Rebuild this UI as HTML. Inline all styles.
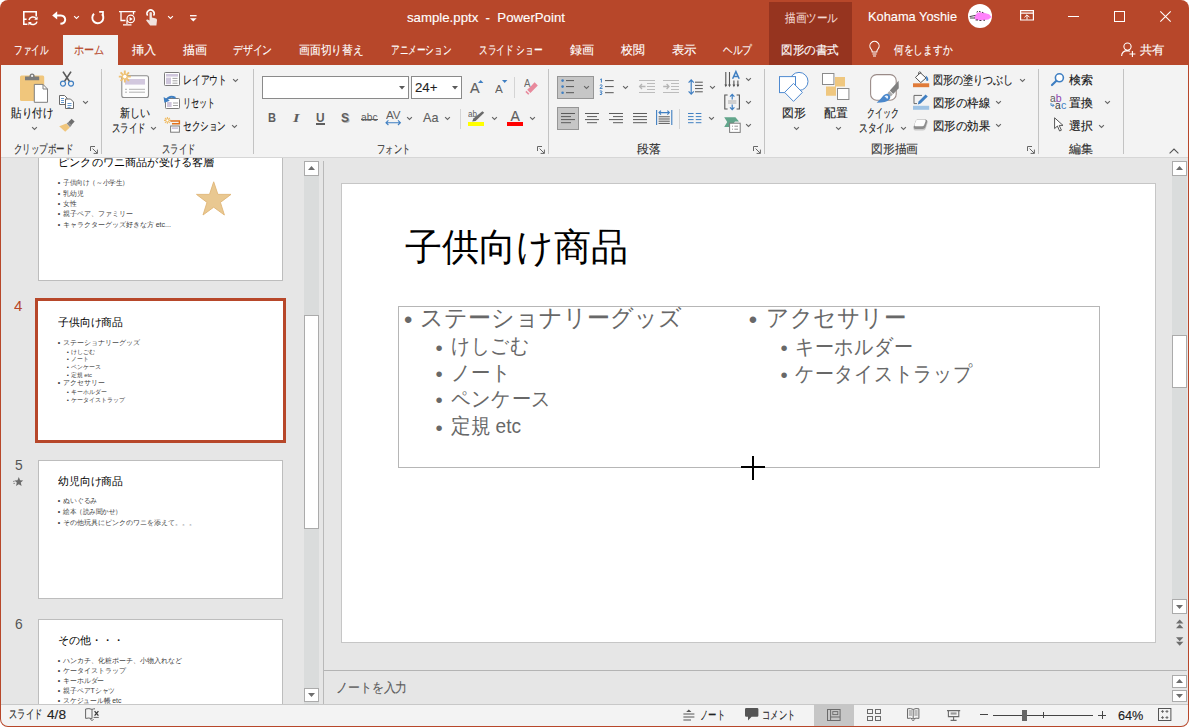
<!DOCTYPE html>
<html lang="ja"><head><meta charset="utf-8"><title>sample.pptx - PowerPoint</title><style>
html,body{margin:0;padding:0;}
body{width:1189px;height:727px;overflow:hidden;background:#fff;font-family:"Liberation Sans",sans-serif;position:relative;}
.a{position:absolute;box-sizing:border-box;}
.t{position:absolute;white-space:nowrap;transform-origin:0 50%;letter-spacing:0;}
svg{display:block;overflow:visible;}
</style></head>
<body>
<div class="a" style="left:0;top:0;width:1189px;height:727px;background:#b7472a;border-radius:8px 8px 8px 8px;"></div><div class="a" style="left:1px;top:65px;width:1187px;height:93px;background:#f3f3f3;"></div><div class="a" style="left:1px;top:157px;width:1187px;height:1px;background:#d6d6d6;"></div><div class="a" style="left:1px;top:158px;width:1187px;height:546px;background:#e6e6e6;"></div><div class="a" style="left:1px;top:704px;width:1187px;height:22px;background:#f3f3f3;border-radius:0 0 7px 7px;"></div><svg class="a" style="left:23px;top:11px;" width="15" height="15" viewBox="0 0 15 15"><path d="M0.8 14 V0.8 H13.2 V5.6 M0.8 13.2 H4.4 M1 8.2 H3.6" fill="none" stroke="#fff" stroke-width="1.6"/><path d="M6 9 A4 3.7 0 0 1 13.2 7.6 M14 10.6 A4 3.7 0 0 1 6.8 12" fill="none" stroke="#fff" stroke-width="1.5"/><path d="M14.6 5.4 V8.8 H11.2 Z M5.4 14.4 V11 H8.8 Z" fill="#fff"/></svg><svg class="a" style="left:52px;top:10.6px;" width="14.4" height="14" viewBox="0 0 14.4 14"><path d="M0.2 4.4 L5.2 0.2 V8.6 Z" fill="#fff"/><path d="M4.6 4.4 H8.8 Q13.2 4.8 13.2 8.8 Q12.8 12.4 8.4 12.8" fill="none" stroke="#fff" stroke-width="2"/></svg><svg class="a" style="left:72.5px;top:15px;" width="7" height="5" viewBox="0 0 7 5"><path d="M1.1 1.1 L3.5 3.5 L5.9 1.1" fill="none" stroke="#fff" stroke-width="1.1"/></svg><svg class="a" style="left:91px;top:11px;" width="14" height="14" viewBox="0 0 14 14"><path d="M11 3.2 A5.5 5.5 0 1 1 3 2.8" fill="none" stroke="#fff" stroke-width="1.9"/><path d="M8.2 0.9 H12 V5" fill="none" stroke="#fff" stroke-width="1.7"/></svg><svg class="a" style="left:119px;top:11px;" width="17" height="15" viewBox="0 0 17 15"><path d="M0 0.7 H16.5 M2 1 V9.5 H6.5 M14.5 1 V3.5 M8 9.5 V13 M4 13.8 H12.5" fill="none" stroke="#fff" stroke-width="1.3"/><circle cx="11.7" cy="7.9" r="3.7" fill="none" stroke="#fff" stroke-width="1.2"/><path d="M10.6 5.9 L13.8 7.9 L10.6 9.9 Z" fill="#fff"/></svg><svg class="a" style="left:145px;top:9px;" width="13" height="17" viewBox="0 0 13 17"><path d="M2.6 6.6 A3.6 3.6 0 1 1 8.6 6.6" fill="none" stroke="#fff" stroke-width="1.5"/><path d="M4.5 3.6 Q5.7 2.4 6.9 3.6 V8.4 L11 9.4 Q12.2 9.8 12 11.2 L11.4 16.5 H5.2 L1.2 11.6 Q1.2 10.2 2.6 10.4 L4.5 11.6 Z" fill="#f0e2de"/></svg><svg class="a" style="left:166.5px;top:15px;" width="7" height="5" viewBox="0 0 7 5"><path d="M1.1 1.1 L3.5 3.5 L5.9 1.1" fill="none" stroke="#fff" stroke-width="1.1"/></svg><svg class="a" style="left:190px;top:14.5px;" width="7" height="7" viewBox="0 0 7 7"><path d="M0 0.7 H6.6" stroke="#fff" stroke-width="1.3"/><path d="M0 3.2 H6.6 L3.3 6.6 Z" fill="#fff"/></svg><span class="t" style="left:407px;top:8px;font-size:13.5px;line-height:19px;color:#ffffff;transform:scaleX(0.979);-webkit-text-stroke:0.13px #ffffff;">sample.pptx&nbsp; - &nbsp;PowerPoint</span><div class="a" style="left:769px;top:2px;width:83px;height:63px;background:#96341f;"></div><span class="t" style="left:785px;top:9.5px;font-size:12px;line-height:17px;color:#f3d9d2;transform:scaleX(0.883);-webkit-text-stroke:0.13px #f3d9d2;">描画ツール</span><span class="t" style="left:868px;top:6.5px;font-size:13.5px;line-height:19px;color:#ffffff;transform:scaleX(0.949);-webkit-text-stroke:0.13px #ffffff;">Kohama Yoshie</span><div class="a" style="left:968px;top:4px;width:24px;height:24px;border-radius:50%;background:#fff;"></div><svg class="a" style="left:968px;top:4px;" width="24" height="24" viewBox="0 0 24 24"><path d="M6.5 12 L9.4 8.8 L12 8.2 L16 8.8 L21 10.2 L23.6 13 L20.4 15.6 L14 16.2 L8 16 L6.4 14 Z" fill="#ff82fb"/><path d="M1.6 12.6 L7.4 11.4 M2 14 H7 M8.6 8.2 L10 7.4 M11 7.4 L12.6 7.8 M14 8.2 L15.4 8.8 M7.6 16 H10 M11.4 16.5 H13.4 M15.4 16.3 H17" stroke="#1a1018" stroke-width="0.8"/></svg><svg class="a" style="left:1019.6px;top:10.4px;" width="14" height="11" viewBox="0 0 14 11"><path d="M0.6 0.6 H13.4 V10 H0.6 Z M0.6 3.2 H13.4" fill="none" stroke="#fff" stroke-width="1.2"/><path d="M7 9.6 V5 M4.4 7.4 L7 4.8 L9.6 7.4" fill="none" stroke="#fff" stroke-width="1"/></svg><div class="a" style="left:1068px;top:16px;width:11px;height:1px;background:#fff;"></div><div class="a" style="left:1114px;top:11px;width:11px;height:11px;border:1px solid #fff;"></div><svg class="a" style="left:1160px;top:11px;" width="11" height="11" viewBox="0 0 11 11"><path d="M0.3 0.3 L10.7 10.7 M10.7 0.3 L0.3 10.7" stroke="#fff" stroke-width="1.1"/></svg><div class="a" style="left:63px;top:35px;width:55px;height:30px;background:#f3f3f3;"></div><span class="t" style="left:13.6px;top:41.8px;font-size:12px;line-height:17px;color:#ffffff;transform:scaleX(0.717);-webkit-text-stroke:0.13px #ffffff;">ファイル</span><span class="t" style="left:131.5px;top:41.8px;font-size:12px;line-height:17px;color:#ffffff;transform:scaleX(1.017);-webkit-text-stroke:0.13px #ffffff;">挿入</span><span class="t" style="left:183.2px;top:41.8px;font-size:12px;line-height:17px;color:#ffffff;-webkit-text-stroke:0.13px #ffffff;">描画</span><span class="t" style="left:233.2px;top:41.8px;font-size:12px;line-height:17px;color:#ffffff;transform:scaleX(0.819);-webkit-text-stroke:0.13px #ffffff;">デザイン</span><span class="t" style="left:299.4px;top:41.8px;font-size:12px;line-height:17px;color:#ffffff;transform:scaleX(0.896);-webkit-text-stroke:0.13px #ffffff;">画面切り替え</span><span class="t" style="left:391.2px;top:41.8px;font-size:12px;line-height:17px;color:#ffffff;transform:scaleX(0.718);-webkit-text-stroke:0.13px #ffffff;">アニメーション</span><span class="t" style="left:478.5px;top:41.8px;font-size:12px;line-height:17px;color:#ffffff;transform:scaleX(0.725);-webkit-text-stroke:0.13px #ffffff;">スライド ショー</span><span class="t" style="left:569.9px;top:41.8px;font-size:12px;line-height:17px;color:#ffffff;-webkit-text-stroke:0.13px #ffffff;">録画</span><span class="t" style="left:620.9px;top:41.8px;font-size:12px;line-height:17px;color:#ffffff;transform:scaleX(0.983);-webkit-text-stroke:0.13px #ffffff;">校閲</span><span class="t" style="left:671.6px;top:41.8px;font-size:12px;line-height:17px;color:#ffffff;transform:scaleX(1.029);-webkit-text-stroke:0.13px #ffffff;">表示</span><span class="t" style="left:722.6px;top:41.8px;font-size:12px;line-height:17px;color:#ffffff;transform:scaleX(0.811);-webkit-text-stroke:0.13px #ffffff;">ヘルプ</span><span class="t" style="left:781.1px;top:41.8px;font-size:12px;line-height:17px;color:#ffffff;transform:scaleX(0.962);-webkit-text-stroke:0.13px #ffffff;">図形の書式</span><span class="t" style="left:74.2px;top:41.8px;font-size:12px;line-height:17px;color:#b7472a;transform:scaleX(0.847);-webkit-text-stroke:0.13px #b7472a;">ホーム</span><svg class="a" style="left:869px;top:41px;" width="11" height="17" viewBox="0 0 11 17"><path d="M3.2 11 Q3.2 9.4 2 8 A4.6 4.6 0 1 1 9 8 Q7.8 9.4 7.8 11 Z M3.4 13 H7.6 M4 15 H7" fill="none" stroke="#fff" stroke-width="1.1"/></svg><span class="t" style="left:894.4px;top:41.5px;font-size:12px;line-height:17px;color:#ffffff;transform:scaleX(0.810);-webkit-text-stroke:0.13px #ffffff;">何をしますか</span><svg class="a" style="left:1121px;top:42px;" width="15" height="15" viewBox="0 0 15 15"><circle cx="6.5" cy="4.6" r="3.6" fill="none" stroke="#fff" stroke-width="1.1"/><path d="M0.6 14 Q0.8 9 6 8.6 Q8 8.6 9 9.4" fill="none" stroke="#fff" stroke-width="1.1"/><path d="M11.4 9 V15 M8.4 12 H14.4" stroke="#fff" stroke-width="1.1"/></svg><span class="t" style="left:1139.8px;top:41.7px;font-size:12px;line-height:17px;color:#ffffff;transform:scaleX(1.025);-webkit-text-stroke:0.13px #ffffff;">共有</span><div class="a" style="left:101px;top:69px;width:1px;height:85px;background:#c3c3c3;"></div><div class="a" style="left:253px;top:69px;width:1px;height:85px;background:#c3c3c3;"></div><div class="a" style="left:548px;top:69px;width:1px;height:85px;background:#c3c3c3;"></div><div class="a" style="left:764px;top:69px;width:1px;height:85px;background:#c3c3c3;"></div><div class="a" style="left:1038px;top:69px;width:1px;height:85px;background:#c3c3c3;"></div><div class="a" style="left:1123px;top:69px;width:1px;height:85px;background:#c3c3c3;"></div><svg class="a" style="left:20px;top:73px;" width="28" height="30" viewBox="0 0 28 30"><rect x="0" y="2.6" width="24.2" height="25.4" rx="1.5" fill="#f0c67c"/><path d="M5 7.2 V3.4 H9.4 Q9.6 0.4 12.1 0.4 Q14.6 0.4 14.8 3.4 H19.2 V7.2 Z" fill="#7b7b7b"/><circle cx="12.1" cy="2.9" r="1.1" fill="#f3f3f3"/><path d="M14.3 11.4 H23 L27.5 16 V29.3 H14.3 Z" fill="#fff" stroke="#7f7f7f" stroke-width="1"/><path d="M23 11.4 V16 H27.5" fill="none" stroke="#7f7f7f" stroke-width="1"/></svg><span class="t" style="left:11px;top:105px;font-size:12px;line-height:17px;color:#161616;transform:scaleX(0.875);-webkit-text-stroke:0.13px #161616;">貼り付け</span><svg class="a" style="left:30.5px;top:126px;" width="7" height="5" viewBox="0 0 7 5"><path d="M1.1 1.1 L3.5 3.5 L5.9 1.1" fill="none" stroke="#666" stroke-width="1.1"/></svg><svg class="a" style="left:60px;top:71px;" width="14" height="16" viewBox="0 0 14 16"><path d="M3 0.6 L9.6 10.6 M11 0.6 L4.4 10.6" stroke="#595959" stroke-width="1.7" fill="none"/><circle cx="3" cy="12.6" r="2.5" fill="none" stroke="#3f7fc2" stroke-width="1.2"/><circle cx="11" cy="12.6" r="2.5" fill="none" stroke="#3f7fc2" stroke-width="1.2"/></svg><svg class="a" style="left:59px;top:95px;" width="15" height="14" viewBox="0 0 15 14"><path d="M0.5 0.5 H5.5 L8 3 V9.5 H0.5 Z" fill="#fff" stroke="#6a6a6a"/><path d="M6.5 4 H11.5 L14.5 7 V13.5 H6.5 Z" fill="#fff" stroke="#6a6a6a"/><path d="M2 3.5 H5 M2 5.5 H5 M2 7.5 H5 M8.5 8.5 H12.5 M8.5 10.5 H12.5 M8.5 12.4 H11.5" stroke="#3f7fc2" stroke-width="0.8"/></svg><svg class="a" style="left:81.5px;top:99.5px;" width="7" height="5" viewBox="0 0 7 5"><path d="M1.1 1.1 L3.5 3.5 L5.9 1.1" fill="none" stroke="#666" stroke-width="1.1"/></svg><svg class="a" style="left:59px;top:118px;" width="16" height="14" viewBox="0 0 16 14"><path d="M9.3 4.3 L12.6 0.8 L15.6 3.4 L12.2 7.2 Z" fill="#6e6e6e"/><path d="M7.6 5.4 L9.6 3.9 L12.6 7.3 L11 9.2 Z" fill="#8a8a8a"/><path d="M0.2 8.2 L7.4 5.4 L10.8 9.4 L6.2 13.8 Z" fill="#f0c67c"/></svg><span class="t" style="left:14px;top:141px;font-size:12px;line-height:17px;color:#333333;transform:scaleX(0.708);-webkit-text-stroke:0.13px #333333;">クリップボード</span><svg class="a" style="left:90px;top:146px;" width="8" height="8" viewBox="0 0 8 8"><path d="M0.5 5 V0.5 H5 M2.6 2.6 L7.2 7.2 M7.4 3.6 V7.4 H3.6" fill="none" stroke="#666" stroke-width="1"/></svg><svg class="a" style="left:119px;top:71px;" width="30" height="27" viewBox="0 0 30 27"><rect x="2.8" y="4.8" width="26.7" height="21.7" rx="2" fill="#fdfdfd" stroke="#8c8c8c" stroke-width="1.1"/><rect x="6" y="8" width="20" height="5.6" fill="#d2c8de"/><path d="M6 18.3 H8 M10 18.3 H26 M6 21.2 H8 M10 21.2 H26" stroke="#a9a9a9" stroke-width="0.9"/><g stroke="#efc070" stroke-width="1.9"><path d="M5.8 -0.4 V11.6 M-0.2 5.6 H11.8 M1.6 1.4 L10 9.8 M10 1.4 L1.6 9.8"/></g><circle cx="5.8" cy="5.6" r="2.3" fill="#fff" stroke="#efc070" stroke-width="1"/></svg><span class="t" style="left:120px;top:105px;font-size:12px;line-height:17px;color:#161616;transform:scaleX(0.833);-webkit-text-stroke:0.13px #161616;">新しい</span><span class="t" style="left:112px;top:120.2px;font-size:12px;line-height:17px;color:#161616;transform:scaleX(0.708);-webkit-text-stroke:0.13px #161616;">スライド</span><svg class="a" style="left:150.1px;top:126px;" width="7" height="5" viewBox="0 0 7 5"><path d="M1.1 1.1 L3.5 3.5 L5.9 1.1" fill="none" stroke="#666" stroke-width="1.1"/></svg><svg class="a" style="left:164px;top:72px;" width="16" height="14" viewBox="0 0 16 14"><rect x="0.5" y="0.5" width="15" height="13" rx="0.8" fill="#fff" stroke="#7c7c7c"/><rect x="2" y="2" width="12" height="2.6" fill="#cfc6dc"/><rect x="2" y="5.6" width="5" height="6.6" fill="#cfc6dc"/><path d="M8.5 6.4 H13.5 M8.5 8.8 H13.5 M8.5 11.2 H13.5" stroke="#9a9a9a" stroke-width="0.9"/></svg><span class="t" style="left:183px;top:71.9px;font-size:12px;line-height:17px;color:#161616;transform:scaleX(0.733);-webkit-text-stroke:0.13px #161616;">レイアウト</span><svg class="a" style="left:231.5px;top:77.5px;" width="7" height="5" viewBox="0 0 7 5"><path d="M1.1 1.1 L3.5 3.5 L5.9 1.1" fill="none" stroke="#666" stroke-width="1.1"/></svg><svg class="a" style="left:164px;top:95px;" width="16" height="14" viewBox="0 0 16 14"><rect x="1.5" y="3.5" width="14" height="10" rx="0.8" fill="#fff" stroke="#7c7c7c"/><rect x="3" y="7" width="4.6" height="5" fill="#cfc6dc"/><path d="M9 8 H14 M9 10.5 H14" stroke="#9a9a9a" stroke-width="0.9"/><path d="M2.4 5.4 Q5.4 -0.4 11.4 3" fill="none" stroke="#3f7fc2" stroke-width="2.1"/><path d="M-0.4 2 L0.4 7.8 L5.8 5.8 Z" fill="#3f7fc2"/></svg><span class="t" style="left:183px;top:95.3px;font-size:12px;line-height:17px;color:#161616;transform:scaleX(0.675);-webkit-text-stroke:0.13px #161616;">リセット</span><svg class="a" style="left:164px;top:117px;" width="16" height="16" viewBox="0 0 16 16"><g stroke="#efbd68" stroke-width="1.1"><path d="M3.4 0 V6.8 M0 3.4 H6.8 M1 1 L5.8 5.8 M5.8 1 L1 5.8"/></g><circle cx="3.4" cy="3.4" r="1.1" fill="#fff"/><path d="M6.4 4 H15.4 V6.8 H8" fill="none" stroke="#e2711d" stroke-width="1.4"/><rect x="6.6" y="9" width="8.8" height="6.2" fill="#fff" stroke="#7c7c7c"/><rect x="8" y="10.3" width="6" height="1.8" fill="#cfc6dc"/></svg><span class="t" style="left:183px;top:117.9px;font-size:12px;line-height:17px;color:#161616;transform:scaleX(0.712);-webkit-text-stroke:0.13px #161616;">セクション</span><svg class="a" style="left:230.5px;top:123.5px;" width="7" height="5" viewBox="0 0 7 5"><path d="M1.1 1.1 L3.5 3.5 L5.9 1.1" fill="none" stroke="#666" stroke-width="1.1"/></svg><span class="t" style="left:161.5px;top:141px;font-size:12px;line-height:17px;color:#333333;transform:scaleX(0.698);-webkit-text-stroke:0.13px #333333;">スライド</span><div class="a" style="left:262px;top:76px;width:147px;height:23px;background:#fff;border:1px solid #8a8a8a;"></div><svg class="a" style="left:399px;top:86px;" width="6" height="3.4" viewBox="0 0 6 3.4"><path d="M0 0 H6 L3 3.4 Z" fill="#5a5a5a"/></svg><div class="a" style="left:411px;top:76px;width:51px;height:23px;background:#fff;border:1px solid #8a8a8a;"></div><span class="t" style="left:414.5px;top:78.6px;font-size:13px;line-height:18px;color:#1f1f1f;transform:scaleX(1.020);-webkit-text-stroke:0.13px #1f1f1f;">24+</span><svg class="a" style="left:452px;top:86px;" width="6" height="3.4" viewBox="0 0 6 3.4"><path d="M0 0 H6 L3 3.4 Z" fill="#5a5a5a"/></svg><span class="t" style="left:470px;top:78px;font-size:14px;line-height:20px;color:#5e5e5e;transform:scaleX(1.027);-webkit-text-stroke:0.13px #5e5e5e;">A</span><svg class="a" style="left:478px;top:80px;" width="5.4" height="3" viewBox="0 0 5.4 3"><path d="M0 3 L2.7 0 L5.4 3 Z" fill="#3f7fc2"/></svg><span class="t" style="left:495px;top:81.5px;font-size:11px;line-height:15px;color:#5e5e5e;transform:scaleX(1.062);">A</span><svg class="a" style="left:501.6px;top:80px;" width="5.4" height="3" viewBox="0 0 5.4 3"><path d="M0 0 H5.4 L2.7 3 Z" fill="#3f7fc2"/></svg><div class="a" style="left:514px;top:77px;width:1px;height:21px;background:#d4d4d4;"></div><span class="t" style="left:523.5px;top:77px;font-size:10px;line-height:14px;color:#6a6a6a;transform:scaleX(0.974);">A</span><svg class="a" style="left:525px;top:82px;" width="13" height="13" viewBox="0 0 13 13"><path d="M6.6 3.4 L9.6 0.2 L12.8 3.4 L5.4 11 L2.2 7.8 Z" fill="#e8899c"/><path d="M1.4 8.8 L4.4 11.8 L3.2 12.8 L0.4 10 Z" fill="#e8899c"/></svg><span class="t" style="left:268.4px;top:108.5px;font-size:12.5px;line-height:18px;color:#5e5e5e;transform:scaleX(0.886);font-weight:bold;">B</span><span class="t" style="left:293px;top:108px;font-size:13.5px;line-height:19px;color:#5e5e5e;transform:scaleX(1.234);font-family:'Liberation Serif',serif;font-style:italic;font-weight:bold;">I</span><span class="t" style="left:316.4px;top:108.5px;font-size:12.5px;line-height:18px;color:#5e5e5e;transform:scaleX(0.952);font-weight:bold;">U</span><div class="a" style="left:316px;top:123.4px;width:9.4px;height:1.2px;background:#5e5e5e;"></div><span class="t" style="left:342.4px;top:109.6px;font-size:12.5px;line-height:18px;color:#b4b4b4;transform:scaleX(0.959);font-weight:bold;">S</span><span class="t" style="left:341px;top:108.5px;font-size:12.5px;line-height:18px;color:#5e5e5e;transform:scaleX(0.959);font-weight:bold;">S</span><span class="t" style="left:361px;top:110.3px;font-size:11px;line-height:15px;color:#5e5e5e;transform:scaleX(0.930);">abc</span><div class="a" style="left:360.5px;top:118.6px;width:17.5px;height:1px;background:#5e5e5e;"></div><span class="t" style="left:385.5px;top:107.9px;font-size:11px;line-height:15px;color:#5e5e5e;transform:scaleX(1.053);">AV</span><svg class="a" style="left:385px;top:120px;" width="16.4" height="5.4" viewBox="0 0 16.4 5.4"><path d="M1 2.7 H15.4 M3.4 0.4 L1 2.7 L3.4 5 M13 0.4 L15.4 2.7 L13 5" fill="none" stroke="#3f7fc2" stroke-width="1.1"/></svg><svg class="a" style="left:405.5px;top:115.5px;" width="7" height="5" viewBox="0 0 7 5"><path d="M1.1 1.1 L3.5 3.5 L5.9 1.1" fill="none" stroke="#666" stroke-width="1.1"/></svg><span class="t" style="left:423px;top:108.5px;font-size:13px;line-height:18px;color:#5e5e5e;transform:scaleX(0.968);-webkit-text-stroke:0.13px #5e5e5e;">Aa</span><svg class="a" style="left:443.5px;top:115.5px;" width="7" height="5" viewBox="0 0 7 5"><path d="M1.1 1.1 L3.5 3.5 L5.9 1.1" fill="none" stroke="#666" stroke-width="1.1"/></svg><div class="a" style="left:460px;top:108.5px;width:1px;height:20px;background:#d4d4d4;"></div><span class="t" style="left:468px;top:108px;font-size:9px;line-height:13px;color:#5e5e5e;transform:scaleX(0.899);">ab</span><svg class="a" style="left:470px;top:110.6px;" width="14.4" height="11" viewBox="0 0 14.4 11"><path d="M12.4 0.2 L14.2 1.8 L5.6 10 L2.2 10.6 L3.4 7.6 Z" fill="#6b6b6b"/></svg><div class="a" style="left:468px;top:122.2px;width:16.2px;height:3.6px;background:#ffff00;"></div><svg class="a" style="left:490.5px;top:115.5px;" width="7" height="5" viewBox="0 0 7 5"><path d="M1.1 1.1 L3.5 3.5 L5.9 1.1" fill="none" stroke="#666" stroke-width="1.1"/></svg><span class="t" style="left:510.5px;top:106.4px;font-size:14px;line-height:20px;color:#5e5e5e;-webkit-text-stroke:0.13px #5e5e5e;">A</span><div class="a" style="left:507px;top:122.2px;width:16.2px;height:3.6px;background:#ff0000;"></div><svg class="a" style="left:529.2px;top:115.5px;" width="7" height="5" viewBox="0 0 7 5"><path d="M1.1 1.1 L3.5 3.5 L5.9 1.1" fill="none" stroke="#666" stroke-width="1.1"/></svg><span class="t" style="left:377px;top:141px;font-size:12px;line-height:17px;color:#333333;transform:scaleX(0.688);-webkit-text-stroke:0.13px #333333;">フォント</span><svg class="a" style="left:537px;top:146px;" width="8" height="8" viewBox="0 0 8 8"><path d="M0.5 5 V0.5 H5 M2.6 2.6 L7.2 7.2 M7.4 3.6 V7.4 H3.6" fill="none" stroke="#666" stroke-width="1"/></svg><div class="a" style="left:557px;top:76px;width:37px;height:23px;background:#c6c6c6;border:1px solid #969696;"></div><svg class="a" style="left:560px;top:78px;" width="16" height="18" viewBox="0 0 16 18"><g fill="#3f7fc2"><circle cx="2.6" cy="2.6" r="1.3"/><circle cx="2.6" cy="8.6" r="1.3"/><circle cx="2.6" cy="14.7" r="1.3"/></g><path d="M6 2.6 H14 M6 8.6 H14 M6 14.7 H14" stroke="#555" stroke-width="1"/></svg><svg class="a" style="left:582.5px;top:84.8px;" width="7" height="5" viewBox="0 0 7 5"><path d="M1.1 1.1 L3.5 3.5 L5.9 1.1" fill="none" stroke="#666" stroke-width="1.1"/></svg><svg class="a" style="left:599px;top:78px;" width="16" height="18" viewBox="0 0 16 18"><path d="M6 2.6 H14.7 M6 8.6 H14.7 M6 14.7 H14.7" stroke="#555" stroke-width="1"/><g fill="none" stroke="#3f7fc2" stroke-width="1"><path d="M1.2 1.6 L2.4 0.8 V4.6"/><path d="M0.8 7.4 Q2.4 6 3.2 7.4 Q3.4 8.6 0.8 10.4 H3.6"/><path d="M0.8 13 Q3.2 12.4 3 13.8 Q2.8 14.6 1.6 14.7 Q3.4 15 3 16 Q2.4 17 0.8 16.4"/></g></svg><svg class="a" style="left:621.5px;top:84.8px;" width="7" height="5" viewBox="0 0 7 5"><path d="M1.1 1.1 L3.5 3.5 L5.9 1.1" fill="none" stroke="#666" stroke-width="1.1"/></svg><svg class="a" style="left:639px;top:80px;" width="16" height="13" viewBox="0 0 16 13"><path d="M0 0.5 H16 M8 3.5 H16 M8 6.5 H16 M8 9.5 H16 M0 12.5 H16" stroke="#b5b5b5" stroke-width="0.9"/><path d="M6.5 6.5 H0.6 M3 4 L0.6 6.5 L3 9" fill="none" stroke="#b5b5b5" stroke-width="1.3"/></svg><svg class="a" style="left:663px;top:80px;" width="16" height="13" viewBox="0 0 16 13"><path d="M0 0.5 H16 M8 3.5 H16 M8 6.5 H16 M8 9.5 H16 M0 12.5 H16" stroke="#b5b5b5" stroke-width="0.9"/><path d="M0.2 6.5 H6 M3.6 4 L6 6.5 L3.6 9" fill="none" stroke="#b5b5b5" stroke-width="1.3"/></svg><svg class="a" style="left:688px;top:79px;" width="15" height="16" viewBox="0 0 15 16"><path d="M3.2 1 V15 M0.6 3.6 L3.2 0.8 L5.8 3.6 M0.6 12.4 L3.2 15.2 L5.8 12.4" fill="none" stroke="#3f7fc2" stroke-width="1.2"/><path d="M7 3.2 H14.8 M7 6.4 H14.8 M7 9.6 H14.8 M7 12.8 H14.8" stroke="#555" stroke-width="1"/></svg><svg class="a" style="left:708.5px;top:84.8px;" width="7" height="5" viewBox="0 0 7 5"><path d="M1.1 1.1 L3.5 3.5 L5.9 1.1" fill="none" stroke="#666" stroke-width="1.1"/></svg><svg class="a" style="left:723.5px;top:71px;" width="16" height="16.5" viewBox="0 0 16 16.5"><path d="M1.8 1 V15 M5.5 1 V15 M9.9 9.4 V15 M13.9 9.4 V15" stroke="#555" stroke-width="1.1"/><path d="M0.4 13.4 L1.8 16.2 L3.2 13.4 Z M4.1 13.4 L5.5 16.2 L6.9 13.4 Z M8.5 13.4 L9.9 16.2 L11.3 13.4 Z M12.5 13.4 L13.9 16.2 L15.3 13.4 Z" fill="#555"/><path d="M8.6 7.8 L11.9 0.6 L15.2 7.8 M9.8 5.4 H14" fill="none" stroke="#3f7fc2" stroke-width="1.5"/></svg><svg class="a" style="left:744.5px;top:76.8px;" width="7" height="5" viewBox="0 0 7 5"><path d="M1.1 1.1 L3.5 3.5 L5.9 1.1" fill="none" stroke="#666" stroke-width="1.1"/></svg><svg class="a" style="left:723.5px;top:94px;" width="17" height="16" viewBox="0 0 17 16"><path d="M3.6 1 H0.8 V15 H3.6 M12.6 1 H15.4 V15 H12.6" fill="none" stroke="#555" stroke-width="1.1"/><path d="M4 7 H12.4 M4 9 H12.4" stroke="#9a9a9a" stroke-width="0.8"/><path d="M8.2 0.4 V5.4 M6 2.6 L8.2 0.4 L10.4 2.6 M8.2 15.6 V10.6 M6 13.4 L8.2 15.6 L10.4 13.4" fill="none" stroke="#3f7fc2" stroke-width="1.2"/></svg><svg class="a" style="left:744.5px;top:99.8px;" width="7" height="5" viewBox="0 0 7 5"><path d="M1.1 1.1 L3.5 3.5 L5.9 1.1" fill="none" stroke="#666" stroke-width="1.1"/></svg><svg class="a" style="left:723.5px;top:117px;" width="17" height="16" viewBox="0 0 17 16"><path d="M0.2 0.2 H11.4 L15 4.6 H11 L9 7 H6 V10 H0.2 L3.2 5 Z" fill="#62a58b"/><rect x="5.6" y="6.2" width="10.6" height="9.2" fill="#fff" stroke="#7c7c7c"/><path d="M8 9.2 H9 M10.4 9.2 H14 M8 12.2 H9 M10.4 12.2 H14" stroke="#8a8a8a" stroke-width="0.9"/></svg><svg class="a" style="left:744.5px;top:122.8px;" width="7" height="5" viewBox="0 0 7 5"><path d="M1.1 1.1 L3.5 3.5 L5.9 1.1" fill="none" stroke="#666" stroke-width="1.1"/></svg><div class="a" style="left:557px;top:107px;width:22px;height:23px;background:#c6c6c6;border:1px solid #969696;"></div><svg class="a" style="left:561px;top:112.7px;" width="14" height="10.4" viewBox="0 0 14 10.4"><path d="M0 0.5 H14 M0 3.6 H10 M0 6.6 H14 M0 9.7 H10" stroke="#5a5a5a" stroke-width="1"/></svg><svg class="a" style="left:585px;top:112.7px;" width="14" height="10.4" viewBox="0 0 14 10.4"><path d="M0 0.5 H14 M2 3.6 H12 M0 6.6 H14 M2 9.7 H12" stroke="#5a5a5a" stroke-width="1"/></svg><svg class="a" style="left:609px;top:112.7px;" width="14" height="10.4" viewBox="0 0 14 10.4"><path d="M0 0.5 H14 M4 3.6 H14 M0 6.6 H14 M4 9.7 H14" stroke="#5a5a5a" stroke-width="1"/></svg><svg class="a" style="left:633px;top:112.7px;" width="14" height="10.4" viewBox="0 0 14 10.4"><path d="M0 0.5 H14 M0 3.6 H14 M0 6.6 H14 M0 9.7 H14" stroke="#5a5a5a" stroke-width="1"/></svg><svg class="a" style="left:656px;top:110px;" width="16.4" height="15.4" viewBox="0 0 16.4 15.4"><path d="M0.6 0 V15 M15.8 0 V15" stroke="#3f7fc2" stroke-width="1.1"/><path d="M3 2.6 H13.4 M5 0.6 L3 2.6 L5 4.6 M11.4 0.6 L13.4 2.6 L11.4 4.6" fill="none" stroke="#3f7fc2" stroke-width="1.1"/><path d="M2.6 6.8 H13.8 M2.6 9 H13.8 M2.6 11.2 H13.8 M2.6 13.4 H13.8" stroke="#555" stroke-width="1"/></svg><div class="a" style="left:679px;top:108.5px;width:1px;height:20px;background:#d4d4d4;"></div><svg class="a" style="left:688px;top:112.7px;" width="13.4" height="10.4" viewBox="0 0 13.4 10.4"><path d="M0 0.5 H5.6 M7.8 0.5 H13.4 M0 3.6 H5.6 M7.8 3.6 H13.4 M0 6.6 H5.6 M7.8 6.6 H13.4 M0 9.7 H5.6 M7.8 9.7 H13.4" stroke="#3f7fc2" stroke-width="1"/></svg><svg class="a" style="left:707.5px;top:115.5px;" width="7" height="5" viewBox="0 0 7 5"><path d="M1.1 1.1 L3.5 3.5 L5.9 1.1" fill="none" stroke="#666" stroke-width="1.1"/></svg><span class="t" style="left:637.3px;top:141px;font-size:12px;line-height:17px;color:#333333;transform:scaleX(0.987);-webkit-text-stroke:0.13px #333333;">段落</span><svg class="a" style="left:753px;top:146px;" width="8" height="8" viewBox="0 0 8 8"><path d="M0.5 5 V0.5 H5 M2.6 2.6 L7.2 7.2 M7.4 3.6 V7.4 H3.6" fill="none" stroke="#666" stroke-width="1"/></svg><svg class="a" style="left:779px;top:72px;" width="30" height="30" viewBox="0 0 30 30"><circle cx="20" cy="9.4" r="9" fill="#fff" stroke="#4f8ad0" stroke-width="1"/><rect x="0.5" y="4.6" width="16" height="16" fill="#fff" stroke="#4f8ad0" stroke-width="1"/><path d="M14.5 11.4 L23.4 20.4 L14.5 29.4 L5.6 20.4 Z" fill="#fff" stroke="#4f8ad0" stroke-width="1"/></svg><span class="t" style="left:782.3px;top:105px;font-size:12px;line-height:17px;color:#161616;transform:scaleX(0.987);-webkit-text-stroke:0.13px #161616;">図形</span><svg class="a" style="left:792.5px;top:126px;" width="7" height="5" viewBox="0 0 7 5"><path d="M1.1 1.1 L3.5 3.5 L5.9 1.1" fill="none" stroke="#666" stroke-width="1.1"/></svg><svg class="a" style="left:822px;top:73px;" width="28" height="27" viewBox="0 0 28 27"><path d="M13 4 H23 V13.6 H14 V22.8 H4 V13.4 H13 Z" fill="#efc77f"/><rect x="0.5" y="0.5" width="11.4" height="11" fill="#fff" stroke="#8a8a8a"/><rect x="15.5" y="15.5" width="11.4" height="11" fill="#fff" stroke="#8a8a8a"/></svg><span class="t" style="left:824px;top:105px;font-size:12px;line-height:17px;color:#161616;transform:scaleX(0.987);-webkit-text-stroke:0.13px #161616;">配置</span><svg class="a" style="left:834.5px;top:126px;" width="7" height="5" viewBox="0 0 7 5"><path d="M1.1 1.1 L3.5 3.5 L5.9 1.1" fill="none" stroke="#666" stroke-width="1.1"/></svg><svg class="a" style="left:870px;top:73.5px;" width="31" height="30" viewBox="0 0 31 30"><rect x="0.6" y="0.6" width="25.6" height="25.6" rx="6" fill="#fff" stroke="#9a8b88" stroke-width="1.1"/><path d="M28.6 6.8 L28.8 14.2 L23.2 20 L19.8 16.6 Z" fill="#808080"/><path d="M19.4 17 L22.8 20.4 L20.8 22.6 L17.4 19.2 Z" fill="#ababab"/><path d="M6.6 28.8 Q11 24.6 13.4 21.4 Q16.4 18.6 19.2 20.4 Q21.4 22.8 19.2 25.8 Q16.6 28.8 6.6 28.8 Z" fill="#4a87cb"/><path d="M14.4 22.6 Q16.4 20.8 18 22.2 Q18.6 23.6 17.2 25 Q16 23.2 14.4 22.6 Z" fill="#e6f0fa"/></svg><span class="t" style="left:867px;top:105.4px;font-size:12px;line-height:17px;color:#161616;transform:scaleX(0.667);-webkit-text-stroke:0.13px #161616;">クイック</span><span class="t" style="left:859px;top:120.4px;font-size:12px;line-height:17px;color:#161616;transform:scaleX(0.729);-webkit-text-stroke:0.13px #161616;">スタイル</span><svg class="a" style="left:899.5px;top:126px;" width="7" height="5" viewBox="0 0 7 5"><path d="M1.1 1.1 L3.5 3.5 L5.9 1.1" fill="none" stroke="#666" stroke-width="1.1"/></svg><svg class="a" style="left:913px;top:71px;" width="16.4" height="16.4" viewBox="0 0 16.4 16.4"><rect x="0" y="12.3" width="16.2" height="3.9" fill="#e07b39"/><path d="M7.4 1.8 L13 7 L7.8 11.6 L2.4 6.4 Z" fill="#fff" stroke="#555" stroke-width="1"/><path d="M5.6 4 V1.4 Q6.6 0.2 7.8 1.4 V3" fill="none" stroke="#555" stroke-width="0.9"/><path d="M12.6 4.4 Q15.8 6.4 15.2 9.4 Q14.2 10.4 13.2 9.4 Q13.6 7 12.6 4.4 Z" fill="#3f7fc2"/></svg><span class="t" style="left:933px;top:72px;font-size:12px;line-height:17px;color:#161616;transform:scaleX(0.839);-webkit-text-stroke:0.13px #161616;">図形の塗りつぶし</span><svg class="a" style="left:1018.5px;top:77.5px;" width="7" height="5" viewBox="0 0 7 5"><path d="M1.1 1.1 L3.5 3.5 L5.9 1.1" fill="none" stroke="#666" stroke-width="1.1"/></svg><svg class="a" style="left:913px;top:94px;" width="16.4" height="16" viewBox="0 0 16.4 16"><rect x="0" y="11.8" width="16.2" height="4" fill="#9fc3e4"/><path d="M9 1.4 H1 V9.6 H4" fill="none" stroke="#6a6a6a" stroke-width="1"/><path d="M12.6 0.4 L14.8 2.6 L7.6 9.6 L4.8 10.4 L5.6 7.6 Z" fill="#3f7fc2"/></svg><span class="t" style="left:933px;top:95.1px;font-size:12px;line-height:17px;color:#161616;transform:scaleX(0.950);-webkit-text-stroke:0.13px #161616;">図形の枠線</span><svg class="a" style="left:994.5px;top:100.3px;" width="7" height="5" viewBox="0 0 7 5"><path d="M1.1 1.1 L3.5 3.5 L5.9 1.1" fill="none" stroke="#666" stroke-width="1.1"/></svg><svg class="a" style="left:913px;top:119px;" width="15.4" height="12" viewBox="0 0 15.4 12"><path d="M4.6 1.6 H13 Q15.4 1.8 14.6 4 L12.8 9.4 Q12.2 11.2 10 11.4 H2.4 Q0 11.2 0.8 9 L2.8 3.2 Q3.2 1.8 4.6 1.6 Z" fill="#c9c9c9"/><path d="M4.4 0.4 H12.6 Q14.8 0.6 14.2 2.6 L12.4 8.2 Q11.8 9.8 9.8 10 H2.2 Q0 9.8 0.6 7.8 L2.6 2 Q3 0.6 4.4 0.4 Z" fill="#8d8d8d"/><path d="M4.6 0.8 H11.6 Q13 1 12.6 2.2 L11.2 6 Q10.6 7.2 9.2 7.2 H2.4 Q1 7 1.4 5.8 L2.8 2 Q3.2 0.8 4.6 0.8 Z" fill="#fdfdfd"/></svg><span class="t" style="left:933px;top:118px;font-size:12px;line-height:17px;color:#161616;transform:scaleX(0.950);-webkit-text-stroke:0.13px #161616;">図形の効果</span><svg class="a" style="left:994.5px;top:123.2px;" width="7" height="5" viewBox="0 0 7 5"><path d="M1.1 1.1 L3.5 3.5 L5.9 1.1" fill="none" stroke="#666" stroke-width="1.1"/></svg><span class="t" style="left:870.6px;top:141px;font-size:12px;line-height:17px;color:#333333;transform:scaleX(0.983);-webkit-text-stroke:0.13px #333333;">図形描画</span><svg class="a" style="left:1027px;top:146px;" width="8" height="8" viewBox="0 0 8 8"><path d="M0.5 5 V0.5 H5 M2.6 2.6 L7.2 7.2 M7.4 3.6 V7.4 H3.6" fill="none" stroke="#666" stroke-width="1"/></svg><svg class="a" style="left:1051px;top:72.6px;" width="13.4" height="12.6" viewBox="0 0 13.4 12.6"><circle cx="8.4" cy="4.8" r="4" fill="#fff" stroke="#3f7fc2" stroke-width="1.6"/><path d="M5.4 7.8 L1 12" stroke="#3f7fc2" stroke-width="2.2" stroke-linecap="round"/></svg><span class="t" style="left:1069px;top:72px;font-size:12px;line-height:17px;color:#161616;-webkit-text-stroke:0.13px #161616;">検索</span><span class="t" style="left:1050px;top:90.9px;font-size:10.5px;line-height:15px;color:#5a5a5a;transform:scaleX(0.975);">a</span><span class="t" style="left:1055.8px;top:90.9px;font-size:10.5px;line-height:15px;color:#8e44ad;">b</span><span class="t" style="left:1055px;top:97.9px;font-size:10.5px;line-height:15px;color:#3a3a3a;transform:scaleX(0.975);">a</span><span class="t" style="left:1060.8px;top:97.9px;font-size:10.5px;line-height:15px;color:#3f7fc2;transform:scaleX(1.029);">c</span><svg class="a" style="left:1050.4px;top:103.4px;" width="4.4" height="4.6" viewBox="0 0 4.4 4.6"><path d="M1 0 V2.4 H4 M2.4 0.8 L4 2.4 L2.4 4" fill="none" stroke="#3f7fc2" stroke-width="0.9"/></svg><span class="t" style="left:1069px;top:94.9px;font-size:12px;line-height:17px;color:#161616;-webkit-text-stroke:0.13px #161616;">置換</span><svg class="a" style="left:1103.5px;top:99.8px;" width="7" height="5" viewBox="0 0 7 5"><path d="M1.1 1.1 L3.5 3.5 L5.9 1.1" fill="none" stroke="#666" stroke-width="1.1"/></svg><svg class="a" style="left:1054px;top:117px;" width="10" height="15" viewBox="0 0 10 15"><path d="M0.6 0.8 V11.6 L3.4 9 L5.6 14 L7.4 13.2 L5.2 8.4 H9 Z" fill="#fff" stroke="#555" stroke-width="1"/></svg><span class="t" style="left:1069px;top:117.9px;font-size:12px;line-height:17px;color:#161616;-webkit-text-stroke:0.13px #161616;">選択</span><svg class="a" style="left:1097.5px;top:123.5px;" width="7" height="5" viewBox="0 0 7 5"><path d="M1.1 1.1 L3.5 3.5 L5.9 1.1" fill="none" stroke="#666" stroke-width="1.1"/></svg><span class="t" style="left:1069px;top:141px;font-size:12px;line-height:17px;color:#333333;-webkit-text-stroke:0.13px #333333;">編集</span><svg class="a" style="left:1169px;top:148px;" width="10" height="6" viewBox="0 0 10 6"><path d="M0.6 5.4 L5 1 L9.4 5.4" fill="none" stroke="#555" stroke-width="1.1"/></svg><div class="a" style="left:38px;top:158px;width:245px;height:123px;background:#fff;border:1px solid #bdbdbd;border-top:none;"></div><div class="a" style="left:38px;top:158px;width:245px;height:14px;overflow:hidden;"><span class="t" style="left:19.6px;top:-3.8px;font-size:11.25px;line-height:16px;color:#000;transform:scaleX(1.016);">ピンクのワニ商品が受ける客層</span></div><span class="t" style="left:57.8px;top:178.3px;font-size:7.1px;line-height:10px;color:#3b3b3b;">•</span><span class="t" style="left:62.7px;top:178.3px;font-size:7.1px;line-height:10px;color:#3b3b3b;transform:scaleX(0.943);">子供向け（～小学生）</span><span class="t" style="left:57.8px;top:189.4px;font-size:7.1px;line-height:10px;color:#3b3b3b;">•</span><span class="t" style="left:62.7px;top:189.4px;font-size:7.1px;line-height:10px;color:#3b3b3b;transform:scaleX(0.976);">乳幼児</span><span class="t" style="left:57.8px;top:199px;font-size:7.1px;line-height:10px;color:#3b3b3b;">•</span><span class="t" style="left:62.7px;top:199px;font-size:7.1px;line-height:10px;color:#3b3b3b;transform:scaleX(0.964);">女性</span><span class="t" style="left:57.8px;top:209.2px;font-size:7.1px;line-height:10px;color:#3b3b3b;">•</span><span class="t" style="left:62.7px;top:209.2px;font-size:7.1px;line-height:10px;color:#3b3b3b;">親子ペア、ファミリー</span><span class="t" style="left:57.8px;top:219.8px;font-size:7.1px;line-height:10px;color:#3b3b3b;">•</span><span class="t" style="left:62.7px;top:219.8px;font-size:7.1px;line-height:10px;color:#3b3b3b;">キャラクターグッズ好きな方 etc...</span><svg class="a" style="left:195.5px;top:181px;" width="35.5" height="35" viewBox="0 0 35.5 35"><path d="M17.7 0.8 L21.9 13.4 L35 13.4 L24.4 21.4 L28.4 34 L17.7 26.2 L7 34 L11 21.4 L0.5 13.4 L13.5 13.4 Z" fill="#e9c891" stroke="#e0b577" stroke-width="0.9"/></svg><div class="a" style="left:35px;top:298px;width:251px;height:145px;background:#fff;border:3px solid #b7472a;"></div><span class="t" style="left:14.2px;top:296px;font-size:14.5px;line-height:20px;color:#b7472a;transform:scaleX(1.040);">4</span><span class="t" style="left:58.2px;top:313.8px;font-size:11.25px;line-height:16px;color:#000;transform:scaleX(0.988);">子供向け商品</span><span class="t" style="left:57.8px;top:337.5px;font-size:7.1px;line-height:10px;color:#3b3b3b;">•</span><span class="t" style="left:62.7px;top:337.5px;font-size:7.1px;line-height:10px;color:#3b3b3b;">ステーショナリーグッズ</span><span class="t" style="left:57.8px;top:378.4px;font-size:7.1px;line-height:10px;color:#3b3b3b;">•</span><span class="t" style="left:62.7px;top:378.4px;font-size:7.1px;line-height:10px;color:#3b3b3b;transform:scaleX(0.988);">アクセサリー</span><span class="t" style="left:66.7px;top:347.1px;font-size:6.1px;line-height:9px;color:#3b3b3b;">•</span><span class="t" style="left:71.2px;top:347.1px;font-size:6.1px;line-height:9px;color:#3b3b3b;">けしごむ</span><span class="t" style="left:66.7px;top:354.4px;font-size:6.1px;line-height:9px;color:#3b3b3b;">•</span><span class="t" style="left:71.2px;top:354.4px;font-size:6.1px;line-height:9px;color:#3b3b3b;transform:scaleX(0.972);">ノート</span><span class="t" style="left:66.7px;top:362.3px;font-size:6.1px;line-height:9px;color:#3b3b3b;">•</span><span class="t" style="left:71.2px;top:362.3px;font-size:6.1px;line-height:9px;color:#3b3b3b;">ペンケース</span><span class="t" style="left:66.7px;top:370.4px;font-size:6.1px;line-height:9px;color:#3b3b3b;">•</span><span class="t" style="left:71.2px;top:370.4px;font-size:6.1px;line-height:9px;color:#3b3b3b;transform:scaleX(0.962);">定規 etc</span><span class="t" style="left:66.7px;top:387.1px;font-size:6.1px;line-height:9px;color:#3b3b3b;">•</span><span class="t" style="left:71.2px;top:387.1px;font-size:6.1px;line-height:9px;color:#3b3b3b;transform:scaleX(0.986);">キーホルダー</span><span class="t" style="left:66.7px;top:395px;font-size:6.1px;line-height:9px;color:#3b3b3b;">•</span><span class="t" style="left:71.2px;top:395px;font-size:6.1px;line-height:9px;color:#3b3b3b;">ケータイストラップ</span><div class="a" style="left:38px;top:460px;width:245px;height:139px;background:#fff;border:1px solid #bdbdbd;"></div><span class="t" style="left:14.5px;top:454.6px;font-size:14.5px;line-height:20px;color:#555;transform:scaleX(0.953);">5</span><svg class="a" style="left:12.5px;top:477.4px;" width="10.2" height="9" viewBox="0 0 10.2 9"><path d="M5.8 0 L7.1 3.2 L10.2 3.4 L7.8 5.6 L8.6 9 L5.8 7.2 L3 9 L3.8 5.6 L1.4 3.4 L4.5 3.2 Z" fill="#6b6b6b"/><path d="M0 4.4 H1.6 M0.4 6.4 H2" stroke="#6b6b6b" stroke-width="0.7"/></svg><span class="t" style="left:58.2px;top:473px;font-size:11.25px;line-height:16px;color:#000;transform:scaleX(0.988);">幼児向け商品</span><span class="t" style="left:57.8px;top:496px;font-size:7.1px;line-height:10px;color:#3b3b3b;">•</span><span class="t" style="left:62.7px;top:496px;font-size:7.1px;line-height:10px;color:#3b3b3b;transform:scaleX(0.980);">ぬいぐるみ</span><span class="t" style="left:57.8px;top:506.8px;font-size:7.1px;line-height:10px;color:#3b3b3b;">•</span><span class="t" style="left:62.7px;top:506.8px;font-size:7.1px;line-height:10px;color:#3b3b3b;transform:scaleX(0.930);">絵本（読み聞かせ）</span><span class="t" style="left:57.8px;top:517.5px;font-size:7.1px;line-height:10px;color:#3b3b3b;">•</span><span class="t" style="left:62.7px;top:517.5px;font-size:7.1px;line-height:10px;color:#3b3b3b;">その他玩具にピンクのワニを添えて。。。</span><div class="a" style="left:38px;top:619px;width:245px;height:85px;background:#fff;border:1px solid #bdbdbd;border-bottom:none;"></div><span class="t" style="left:14.5px;top:613.7px;font-size:14.5px;line-height:20px;color:#555;transform:scaleX(0.953);">6</span><span class="t" style="left:58px;top:632px;font-size:11.25px;line-height:16px;color:#000;">その他・・・</span><div class="a" style="left:38px;top:650px;width:245px;height:54px;overflow:hidden;"><span class="t" style="left:19.8px;top:5.5px;font-size:7.1px;line-height:10px;color:#3b3b3b;">•</span><span class="t" style="left:24.7px;top:5.5px;font-size:7.1px;line-height:10px;color:#3b3b3b;">ハンカチ、化粧ポーチ、小物入れなど</span><span class="t" style="left:19.8px;top:16.4px;font-size:7.1px;line-height:10px;color:#3b3b3b;">•</span><span class="t" style="left:24.7px;top:16.4px;font-size:7.1px;line-height:10px;color:#3b3b3b;">ケータイストラップ</span><span class="t" style="left:19.8px;top:26px;font-size:7.1px;line-height:10px;color:#3b3b3b;">•</span><span class="t" style="left:24.7px;top:26px;font-size:7.1px;line-height:10px;color:#3b3b3b;transform:scaleX(0.983);">キーホルダー</span><span class="t" style="left:19.8px;top:36.2px;font-size:7.1px;line-height:10px;color:#3b3b3b;">•</span><span class="t" style="left:24.7px;top:36.2px;font-size:7.1px;line-height:10px;color:#3b3b3b;transform:scaleX(0.980);">親子ペアTシャツ</span><span class="t" style="left:19.8px;top:46.3px;font-size:7.1px;line-height:10px;color:#3b3b3b;">•</span><span class="t" style="left:24.7px;top:46.3px;font-size:7.1px;line-height:10px;color:#3b3b3b;transform:scaleX(0.965);">スケジュール帳 etc</span></div><div class="a" style="left:304px;top:161px;width:15px;height:543px;background:#dadcdc;"></div><div class="a" style="left:304px;top:161px;width:15px;height:15px;background:#fff;border:1px solid #ababab;"></div><svg class="a" style="left:308px;top:166.4px;" width="7" height="4" viewBox="0 0 7 4"><path d="M0 4 L3.5 0 L7 4 Z" fill="#6e6e6e"/></svg><div class="a" style="left:304px;top:315px;width:15px;height:214px;background:#fff;border:1px solid #ababab;"></div><div class="a" style="left:304px;top:688px;width:15px;height:14px;background:#fff;border:1px solid #ababab;"></div><svg class="a" style="left:308px;top:693.4px;" width="7" height="4" viewBox="0 0 7 4"><path d="M0 0 H7 L3.5 4 Z" fill="#6e6e6e"/></svg><div class="a" style="left:323px;top:161px;width:1px;height:543px;background:#b9b9b9;"></div><div class="a" style="left:341px;top:183px;width:815px;height:460px;background:#fff;border:1px solid #c6c6c6;"></div><span class="t" style="left:405.2px;top:220.6px;font-size:37.5px;line-height:52px;color:#000;transform:scaleX(0.976);">子供向け商品</span><div class="a" style="left:398px;top:306px;width:702px;height:162px;border:1px solid #b6b6b6;"></div><span class="t" style="left:404px;top:303px;font-size:23.9px;line-height:33px;color:#686868;">•</span><span class="t" style="left:420px;top:301.4px;font-size:23.9px;line-height:33px;color:#686868;transform:scaleX(0.960);">ステーショナリーグッズ</span><span class="t" style="left:435.6px;top:332.5px;font-size:20.5px;line-height:29px;color:#686868;">•</span><span class="t" style="left:450.6px;top:331.1px;font-size:20.5px;line-height:29px;color:#686868;transform:scaleX(0.891);">けしごむ</span><span class="t" style="left:435.6px;top:359.3px;font-size:20.5px;line-height:29px;color:#686868;">•</span><span class="t" style="left:450.6px;top:357.9px;font-size:20.5px;line-height:29px;color:#686868;transform:scaleX(0.923);">ノート</span><span class="t" style="left:435.6px;top:385.3px;font-size:20.5px;line-height:29px;color:#686868;">•</span><span class="t" style="left:450.6px;top:383.9px;font-size:20.5px;line-height:29px;color:#686868;transform:scaleX(0.917);">ペンケース</span><span class="t" style="left:435.6px;top:412.5px;font-size:20.5px;line-height:29px;color:#686868;">•</span><span class="t" style="left:450.6px;top:411.1px;font-size:20.5px;line-height:29px;color:#686868;transform:scaleX(0.933);">定規 etc</span><span class="t" style="left:748.8px;top:302.9px;font-size:23.9px;line-height:33px;color:#686868;">•</span><span class="t" style="left:766px;top:301.3px;font-size:23.9px;line-height:33px;color:#686868;transform:scaleX(0.940);">アクセサリー</span><span class="t" style="left:780.4px;top:333.1px;font-size:20.5px;line-height:29px;color:#686868;">•</span><span class="t" style="left:795.4px;top:331.7px;font-size:20.5px;line-height:29px;color:#686868;transform:scaleX(0.908);">キーホルダー</span><span class="t" style="left:780.4px;top:360.4px;font-size:20.5px;line-height:29px;color:#686868;">•</span><span class="t" style="left:795.4px;top:359px;font-size:20.5px;line-height:29px;color:#686868;transform:scaleX(0.904);">ケータイストラップ</span><div class="a" style="left:741px;top:466.4px;width:24px;height:2px;background:#000;"></div><div class="a" style="left:751.8px;top:455.5px;width:2px;height:24px;background:#000;"></div><div class="a" style="left:1172px;top:161px;width:15px;height:453px;background:#dadcdc;"></div><div class="a" style="left:1172px;top:161px;width:15px;height:15px;background:#fff;border:1px solid #ababab;"></div><svg class="a" style="left:1176px;top:166.4px;" width="7" height="4" viewBox="0 0 7 4"><path d="M0 4 L3.5 0 L7 4 Z" fill="#6e6e6e"/></svg><div class="a" style="left:1172px;top:335px;width:15px;height:53px;background:#fff;border:1px solid #ababab;"></div><div class="a" style="left:1172px;top:599px;width:15px;height:15px;background:#fff;border:1px solid #ababab;"></div><svg class="a" style="left:1176px;top:604.6px;" width="7" height="4" viewBox="0 0 7 4"><path d="M0 0 H7 L3.5 4 Z" fill="#6e6e6e"/></svg><svg class="a" style="left:1176px;top:619px;" width="7.4" height="9.4" viewBox="0 0 7.4 9.4"><path d="M0 4.6 L3.7 0.6 L7.4 4.6 Z M0 9.2 L3.7 5.2 L7.4 9.2 Z" fill="#6e6e6e"/></svg><svg class="a" style="left:1176px;top:636.6px;" width="7.4" height="9.4" viewBox="0 0 7.4 9.4"><path d="M0 0.2 H7.4 L3.7 4.2 Z M0 4.8 H7.4 L3.7 8.8 Z" fill="#6e6e6e"/></svg><div class="a" style="left:324px;top:670px;width:863px;height:1px;background:#b4b4b4;"></div><span class="t" style="left:336px;top:679px;font-size:13px;line-height:18px;color:#5a5a5a;transform:scaleX(0.915);-webkit-text-stroke:0.13px #5a5a5a;">ノートを入力</span><div class="a" style="left:1172px;top:675px;width:15px;height:12.6px;background:#fff;border:1px solid #ababab;"></div><svg class="a" style="left:1176px;top:679.4px;" width="7" height="4" viewBox="0 0 7 4"><path d="M0 4 L3.5 0 L7 4 Z" fill="#6e6e6e"/></svg><div class="a" style="left:1172px;top:689.6px;width:15px;height:12.6px;background:#fff;border:1px solid #ababab;"></div><svg class="a" style="left:1176px;top:694px;" width="7" height="4" viewBox="0 0 7 4"><path d="M0 0 H7 L3.5 4 Z" fill="#6e6e6e"/></svg><div class="a" style="left:1px;top:704px;width:1187px;height:1px;background:#c8c8c8;"></div><span class="t" style="left:9.2px;top:706.3px;font-size:12px;line-height:17px;color:#222;transform:scaleX(0.688);-webkit-text-stroke:0.13px #222;">スライド</span><span class="t" style="left:46.8px;top:706px;font-size:12.5px;line-height:18px;color:#222;transform:scaleX(1.093);-webkit-text-stroke:0.13px #222;">4/8</span><svg class="a" style="left:85px;top:708px;" width="15" height="13" viewBox="0 0 15 13"><path d="M7 1.4 V10.6 M7 1.4 Q4 0 0.6 1 V10.4 Q4 9.4 7 10.8 M7 1.4 Q8.6 0.7 10 0.8" fill="none" stroke="#666" stroke-width="1"/><path d="M5.4 11 L7 12.8 L8.6 11" fill="none" stroke="#666" stroke-width="0.9"/><path d="M9.6 3.2 L13.4 7.6 M13.4 3.2 L9.6 7.6" stroke="#3a3a3a" stroke-width="1.3"/><path d="M8.6 9.4 H13.8" stroke="#555" stroke-width="0.9"/></svg><svg class="a" style="left:682.6px;top:709px;" width="12" height="12" viewBox="0 0 12 12"><path d="M5.8 0.4 L8.4 3 H3.2 Z" fill="#555"/><path d="M0.4 5 H11.4 M0.4 8 H11.4 M0.4 11 H8" stroke="#555" stroke-width="1"/></svg><span class="t" style="left:699.5px;top:707.1px;font-size:12px;line-height:17px;color:#222;transform:scaleX(0.700);-webkit-text-stroke:0.13px #222;">ノート</span><svg class="a" style="left:745.4px;top:708.4px;" width="13.4" height="12.8" viewBox="0 0 13.4 12.8"><path d="M1.2 0 H12.2 Q13.4 0 13.4 1.2 V7.6 Q13.4 8.8 12.2 8.8 H6.6 L3 12.6 V8.8 H1.2 Q0 8.8 0 7.6 V1.2 Q0 0 1.2 0 Z" fill="#555"/></svg><span class="t" style="left:761.8px;top:707.1px;font-size:12px;line-height:17px;color:#222;transform:scaleX(0.692);-webkit-text-stroke:0.13px #222;">コメント</span><div class="a" style="left:814px;top:704px;width:40px;height:22px;background:#c6c6c6;"></div><svg class="a" style="left:827.4px;top:708.6px;" width="13.6" height="12" viewBox="0 0 13.6 12"><rect x="0.5" y="0.5" width="12.6" height="11" fill="none" stroke="#6a6a6a"/><path d="M3.6 0.5 V11.5 M3.6 8 H13" stroke="#6a6a6a"/><rect x="5.8" y="2.6" width="5" height="3" fill="none" stroke="#6a6a6a" stroke-width="0.9"/></svg><svg class="a" style="left:866.8px;top:708.6px;" width="14.2" height="12" viewBox="0 0 14.2 12"><g fill="none" stroke="#6a6a6a"><rect x="0.5" y="0.5" width="5" height="4"/><rect x="8.5" y="0.5" width="5" height="4"/><rect x="0.5" y="7.5" width="5" height="4"/><rect x="8.5" y="7.5" width="5" height="4"/></g></svg><svg class="a" style="left:907.3px;top:708px;" width="12.4" height="13" viewBox="0 0 12.4 13"><path d="M6.2 1.4 V11 M6.2 1.4 Q3.4 0 0.5 0.8 V10.4 Q3.4 9.6 6.2 11 Q9 9.6 11.9 10.4 V0.8 Q9 0 6.2 1.4" fill="none" stroke="#6a6a6a" stroke-width="1"/><path d="M1.8 3 H5 M1.8 5 H5 M1.8 7 H5 M7.4 3 H10.6 M7.4 5 H10.6 M7.4 7 H10.6" stroke="#6a6a6a" stroke-width="0.8"/><path d="M4.6 11.4 L6.2 13 L7.8 11.4" fill="none" stroke="#6a6a6a" stroke-width="0.9"/></svg><svg class="a" style="left:947px;top:709.6px;" width="13.2" height="11" viewBox="0 0 13.2 11"><path d="M0 0.6 H13.2 M1.4 0.6 V6.6 H11.8 V0.6 M6.6 6.6 V10 M3.6 10.4 H9.6" fill="none" stroke="#6a6a6a" stroke-width="1.1"/><rect x="3.6" y="2.4" width="6" height="2.2" fill="#9a9a9a"/></svg><div class="a" style="left:980px;top:714.4px;width:8px;height:1px;background:#444;"></div><div class="a" style="left:993px;top:715px;width:100px;height:1px;background:#444;"></div><div class="a" style="left:1022.4px;top:709.6px;width:4.6px;height:11px;background:#666;"></div><div class="a" style="left:1043px;top:712.4px;width:1px;height:6px;background:#444;"></div><div class="a" style="left:1098px;top:714.6px;width:8px;height:1px;background:#444;"></div><div class="a" style="left:1101.5px;top:711px;width:1px;height:8px;background:#444;"></div><span class="t" style="left:1118px;top:706.6px;font-size:13px;line-height:18px;color:#222;transform:scaleX(0.976);-webkit-text-stroke:0.13px #222;">64%</span><svg class="a" style="left:1158px;top:708px;" width="13.4" height="13" viewBox="0 0 13.4 13"><rect x="0.5" y="0.5" width="12.4" height="12" fill="none" stroke="#555"/><path d="M4.6 2 V5 M3 3.4 H6 M9 2 V5 M7.4 3.4 H10.4 M4.6 8 V11 M3 9.6 H6 M9 8 V11 M7.4 9.6 H10.4" stroke="#555" stroke-width="0.8"/></svg>
</body></html>
